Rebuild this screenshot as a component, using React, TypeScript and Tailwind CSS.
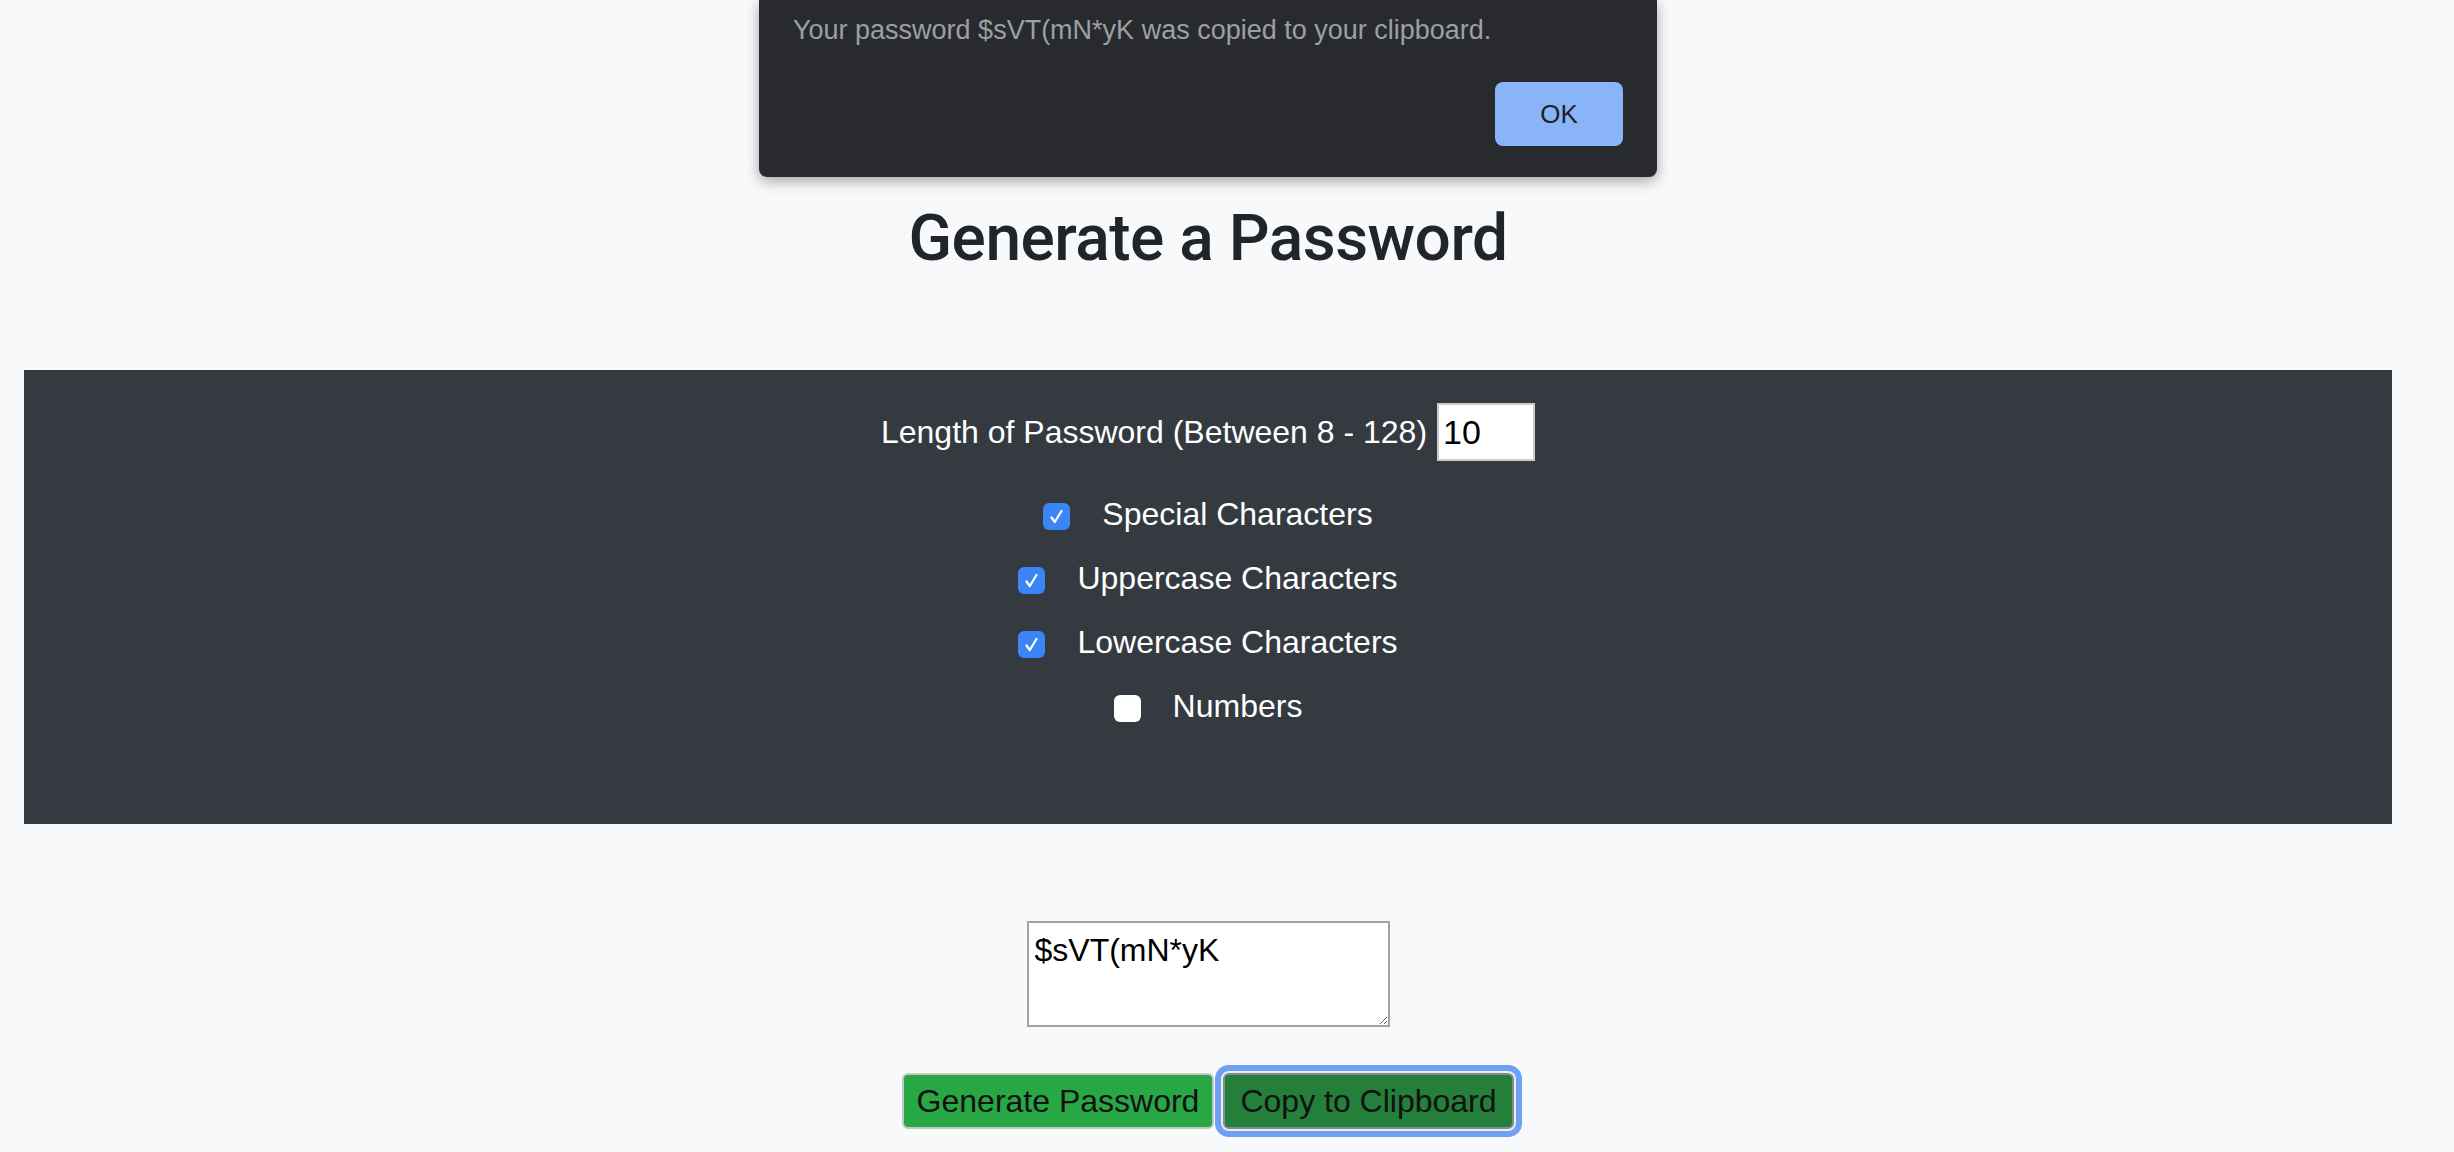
import React, { useState } from 'react';

const OPTIONS = [
  { id: 'special', label: 'Special Characters', checked: true },
  { id: 'upper', label: 'Uppercase Characters', checked: true },
  { id: 'lower', label: 'Lowercase Characters', checked: true },
  { id: 'numbers', label: 'Numbers', checked: false },
];

const Check: React.FC<{ on: boolean; onClick: () => void }> = ({ on, onClick }) => (
  <button
    onClick={onClick}
    className={`mt-[4px] flex h-[27px] w-[27px] items-center justify-center rounded-[6px] ${on ? 'bg-[#3b86f7]' : 'bg-white'}`}
  >
    {on && (
      <svg viewBox="0 0 27 27" className="h-[27px] w-[27px]">
        <path d="M8.5 14.5 L11.8 19 L18.5 8" fill="none" stroke="white" strokeWidth="2.2" strokeLinecap="round" strokeLinejoin="round" />
      </svg>
    )}
  </button>
);

const App: React.FC = () => {
  const [length, setLength] = useState('10');
  const [password, setPassword] = useState('$sVT(mN*yK');
  const [opts, setOpts] = useState<Record<string, boolean>>(
    Object.fromEntries(OPTIONS.map(o => [o.id, o.checked]))
  );

  const toggle = (id: string) => setOpts({ ...opts, [id]: !opts[id] });

  return (
    <div className="min-h-screen bg-[#f8f9fa] font-['Liberation_Sans',Arial,sans-serif]">
      <div className="relative w-[2416px] px-[24px] pt-[200px]">
        {/* browser alert */}
        <div className="absolute left-1/2 top-0 w-[898px] -translate-x-1/2 rounded-b-[8px] bg-[#292a2d] px-[34px] pb-[31px] pt-[14px] shadow-[0_4px_14px_rgba(0,0,0,0.35)]">
          <p className="text-[27px] leading-[32px] text-[#9aa0a6]">
            Your password $sVT(mN*yK was copied to your clipboard.
          </p>
          <div className="mt-[36px] flex justify-end">
            <button className="h-[64px] w-[128px] rounded-[8px] bg-[#8ab4f8] text-[26px] text-[#202124]">OK</button>
          </div>
        </div>

        <h1 className="text-center font-['Roboto',sans-serif] text-[64px] font-medium leading-[77px] tracking-[-0.5px] text-[#212529]">
          Generate a Password
        </h1>

        <div className="mt-[93px] bg-[#343a40] pb-[86px] pt-[33px] text-[32px] leading-[38px] text-white">
          <div className="flex items-center justify-center gap-[10px]">
            <span>Length of Password (Between 8 - 128)</span>
            <input
              value={length}
              onChange={e => setLength(e.target.value)}
              className="h-[58px] w-[98px] border-2 border-[#cdcdcd] bg-white pl-[4px] text-[34px] text-black outline-none"
            />
          </div>
          <div className="mt-[21px]">
            {OPTIONS.map(o => (
              <div key={o.id} className="flex h-[64px] items-center justify-center gap-[32px]">
                <Check on={opts[o.id]} onClick={() => toggle(o.id)} />
                <span>{o.label}</span>
              </div>
            ))}
          </div>
        </div>

        <div className="mt-[97px] flex justify-center">
          <textarea
            value={password}
            onChange={e => setPassword(e.target.value)}
            className="block h-[106px] w-[363px] border-2 border-[#a3a3a3] bg-white px-[6px] pt-[8px] text-[32px] leading-[38px] text-black outline-none"
          />
        </div>

        <div className="mt-[46px] flex justify-center gap-[9px]">
          <button className="h-[56px] w-[312px] rounded-[6px] border-2 border-[#c6c6c6] bg-[#28a745] text-[32px] text-[#111]">
            Generate Password
          </button>
          <button className="h-[56px] w-[291px] rounded-[6px] border-2 border-[#8a8a8a] bg-[#237f3a] text-[32px] text-[#111] shadow-[0_0_0_2px_#e6edf9,0_0_0_8px_#6ea0f3]">
            Copy to Clipboard
          </button>
        </div>
      </div>
    </div>
  );
};

export default App;
